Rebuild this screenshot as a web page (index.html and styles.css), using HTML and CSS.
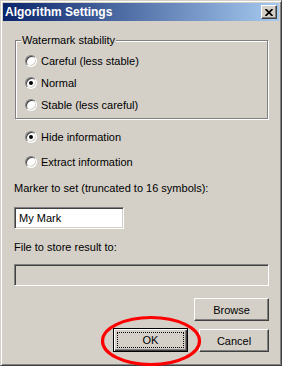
FILE: index.html
```html
<!DOCTYPE html>
<html lang="en">
<head>
    <meta charset="UTF-8">
    <title>Algorithm Settings</title>
    <link rel="stylesheet" href="styles.css">
</head>
<body>
    <div class="window">
        <div class="titlebar">
            <span class="title">Algorithm Settings</span>
            <span class="close-btn">
                <svg width="8" height="7" viewBox="0 0 8 7">
                    <path d="M0.5 0 L7.5 7 M7.5 0 L0.5 7" stroke="#000" stroke-width="1.7" fill="none"/>
                </svg>
            </span>
        </div>

        <div class="content">
            <fieldset class="group">
                <legend>Watermark stability</legend>
                <div class="radio-row"><span class="radio"></span>Careful (less stable)</div>
                <div class="radio-row"><span class="radio checked"></span>Normal</div>
                <div class="radio-row"><span class="radio"></span>Stable (less careful)</div>
            </fieldset>

            <div class="options">
                <div class="radio-row"><span class="radio checked"></span>Hide information</div>
                <div class="radio-row"><span class="radio"></span>Extract information</div>
            </div>

            <div class="label marker-label">Marker to set (truncated to 16 symbols):</div>
            <div class="textbox marker-box">My Mark</div>

            <div class="label file-label">File to store result to:</div>
            <div class="textbox file-box disabled"></div>

            <div class="browse-row">
                <div class="button">Browse</div>
            </div>

            <div class="bottom-row">
                <div class="button default"><span class="focus">OK</span></div>
                <div class="button cancel">Cancel</div>
            </div>
        </div>

        <svg class="highlight" width="102" height="52" viewBox="0 0 102 52">
            <ellipse cx="51" cy="26" rx="48.5" ry="23.5" stroke="#f00" stroke-width="3.2" fill="none"/>
        </svg>
    </div>
</body>
</html>
```

FILE: styles.css
```css
body {
    margin: 0;
    font-family: "Liberation Sans", Arial, sans-serif;
    font-size: 11px;
    color: #000;
}
.window {
    position: relative;
    width: 282px;
    height: 366px;
    box-sizing: border-box;
    padding: 2px;
    background: #d4d0c8;
    border: 1px solid;
    border-color: #d4d0c8 #404040 #404040 #d4d0c8;
    box-shadow: inset 1px 1px #fff, inset -1px -1px #808080;
}
.titlebar {
    height: 18px;
    display: flex;
    align-items: center;
    justify-content: space-between;
    padding: 0 2px 0 2px;
    background: linear-gradient(to right, #0a246a, #a6caf0);
}
.title {
    color: #fff;
    font-weight: bold;
    font-size: 12px;
}
.close-btn {
    width: 16px;
    height: 14px;
    box-sizing: border-box;
    display: flex;
    align-items: center;
    justify-content: center;
    background: #d4d0c8;
    border: 1px solid;
    border-color: #fff #404040 #404040 #fff;
    box-shadow: inset -1px -1px #808080;
}
.content {
    padding: 12px 10px 0 11px;
}
.group {
    margin: 0 1px 0 1px;
    padding: 3px 8px 2px 9px;
    border: 1px solid #808080;
    box-shadow: inset 1px 1px #fff, 1px 1px #fff;
}
.group legend {
    margin-left: -4px;
    padding: 0 1px;
    line-height: 14px;
    background: #d4d0c8;
}
.radio-row {
    height: 22px;
    display: flex;
    align-items: center;
    gap: 4px;
}
.radio {
    width: 12px;
    height: 12px;
    box-sizing: border-box;
    border-radius: 50%;
    background: #fff;
    border: 1px solid;
    border-color: #808080 #fff #fff #808080;
    box-shadow: inset 1px 1px #404040, inset -1px -1px #d4d0c8;
    display: flex;
    align-items: center;
    justify-content: center;
}
.radio.checked::after {
    content: "";
    width: 4px;
    height: 4px;
    border-radius: 50%;
    background: #000;
}
.options {
    margin-top: 7px;
    padding-left: 11px;
    display: flex;
    flex-direction: column;
    gap: 3px;
}
.label {
    line-height: 14px;
}
.marker-label {
    margin-top: 8px;
}
.file-label {
    margin-top: 11px;
}
.textbox {
    height: 22px;
    box-sizing: border-box;
    padding: 0 4px;
    display: flex;
    align-items: center;
    background: #fff;
    border: 1px solid;
    border-color: #808080 #fff #fff #808080;
    box-shadow: inset 1px 1px #404040, inset -1px -1px #d4d0c8;
}
.marker-box {
    width: 110px;
    margin-top: 12px;
}
.file-box {
    margin-top: 10px;
}
.textbox.disabled {
    background: #d4d0c8;
}
.browse-row {
    margin-top: 12px;
    display: flex;
    justify-content: flex-end;
}
.button {
    width: 75px;
    height: 23px;
    box-sizing: border-box;
    display: flex;
    align-items: center;
    justify-content: center;
    background: #d4d0c8;
    border: 1px solid;
    border-color: #fff #404040 #404040 #fff;
    box-shadow: inset -1px -1px #808080;
}
.bottom-row {
    margin-top: 7px;
    display: flex;
    justify-content: flex-end;
    gap: 11px;
}
.button.default {
    height: 24px;
    padding: 3px;
    border-color: #000;
    box-shadow: inset 1px 1px #fff, inset -1px -1px #404040, inset -2px -2px #808080;
}
.focus {
    flex: 1;
    align-self: stretch;
    display: flex;
    align-items: center;
    justify-content: center;
    border: 1px dotted #000;
}
.button.cancel {
    width: 70px;
    margin-top: 1px;
}
.highlight {
    position: absolute;
    left: 99px;
    top: 314px;
}
```
